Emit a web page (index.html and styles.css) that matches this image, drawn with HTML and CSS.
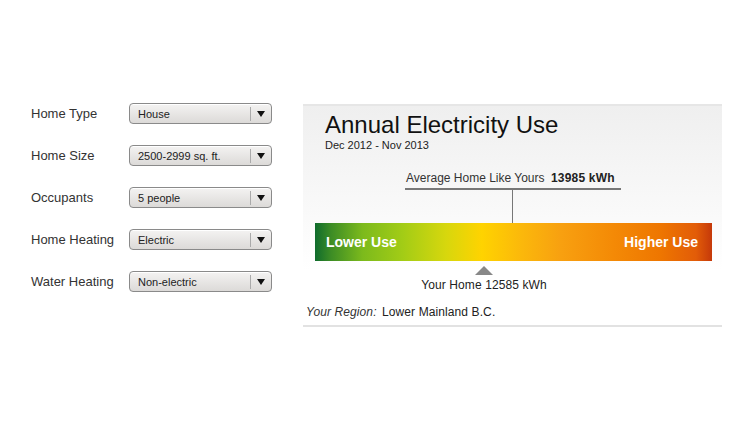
FILE: index.html
```html
<!DOCTYPE html>
<html>
<head>
<meta charset="utf-8">
<link rel="stylesheet" href="styles.css">
</head>
<body>
<div class="page">
  <div class="form">
    <div class="row"><span class="label">Home Type</span><div class="select"><span class="val">House</span><span class="arrow"></span></div></div>
    <div class="row"><span class="label">Home Size</span><div class="select"><span class="val">2500-2999 sq. ft.</span><span class="arrow"></span></div></div>
    <div class="row"><span class="label">Occupants</span><div class="select"><span class="val">5 people</span><span class="arrow"></span></div></div>
    <div class="row"><span class="label">Home Heating</span><div class="select"><span class="val">Electric</span><span class="arrow"></span></div></div>
    <div class="row"><span class="label">Water Heating</span><div class="select"><span class="val">Non-electric</span><span class="arrow"></span></div></div>
  </div>
  <div class="panel">
    <h1 class="title">Annual Electricity Use</h1>
    <div class="sub">Dec 2012 - Nov 2013</div>
    <div class="avg"><span>Average Home Like Yours</span> <b>13985 kWh</b></div>
    <div class="avgline"></div>
    <div class="stem"></div>
    <div class="bar"><span>Lower Use</span><span>Higher Use</span></div>
    <div class="you"><div class="tri"></div><div class="youtext">Your Home 12585 kWh</div></div>
    <div class="region"><i>Your Region:</i> Lower Mainland B.C.</div>
  </div>
</div>
</body>
</html>
```
FILE: styles.css
```css
html, body { margin: 0; padding: 0; background: #fff; }
body { font-family: "Liberation Sans", Arial, sans-serif; color: #333; }
.page { display: flex; padding: 103px 0 0 31px; }
.form { width: 272px; display: flex; flex-direction: column; gap: 21px; }
.row { display: flex; align-items: center; height: 21px; }
.label { width: 98px; font-size: 13px; color: #333; }
.select {
  width: 141px; height: 19px; border: 1px solid #8a8a8a; border-radius: 4px;
  background: linear-gradient(#f4f3f2, #dcdad8);
  display: flex; align-items: center; position: relative;
  box-shadow: inset 0 1px 0 #fff;
}
.val { flex: 1; font-size: 11px; color: #222; padding-left: 8px; }
.arrow { width: 20px; height: 14px; border-left: 1px solid #aaa; position: relative; }
.arrow::after {
  content: ""; position: absolute; left: 6px; top: 4px;
  border-left: 4px solid transparent; border-right: 4px solid transparent; border-top: 6px solid #111;
}
.panel {
  margin-top: 1px; width: 419px; height: 219px; position: relative;
  border-top: 2px solid #e6e6e6; border-bottom: 2px solid #e2e2e2;
  background: linear-gradient(#efefef, #ffffff 75%);
  display: flex; flex-direction: column;
}
.title { margin: 6px 0 0 22px; font-size: 24px; font-weight: normal; color: #111; line-height: 26px; }
.sub { margin: 1px 0 0 22px; font-size: 11px; color: #222; line-height: 12px; }
.avg { margin: 20px 0 0 0; align-self: flex-start; margin-left: 103px; font-size: 12px; color: #333; line-height: 14px; }
.avg b { color: #222; margin-left: 3px; letter-spacing: 0.2px; }
.avgline { margin: 3px 0 0 102px; width: 216px; height: 2px; background: #777; }
.stem { margin-left: 209px; width: 1px; height: 33px; background: #777; }
.bar {
  margin-left: 12px; width: 397px; height: 38px; box-sizing: border-box;
  padding: 0 14px 0 11px; display: flex; justify-content: space-between; align-items: center;
  color: #fff; font-weight: bold; font-size: 14px;
  background: linear-gradient(to right, #0f6b2c 0%, #3c8c25 4%, #7cba1c 12%, #a2cc16 22%, #d7d70d 33%, #ffd300 42%, #fbb80b 52%, #f8a010 62%, #f48a06 75%, #ee7600 87%, #e25c08 96%, #c5390a 100%);
}
.you { margin-left: 159px; width: 44px; display: flex; flex-direction: column; align-items: center; }
.tri { margin-top: 5px; border-left: 9px solid transparent; border-right: 9px solid transparent; border-bottom: 9px solid #888; }
.youtext { margin-top: 3px; font-size: 12px; white-space: nowrap; color: #222; line-height: 14px; letter-spacing: 0.1px; }
.region { margin: 13px 0 0 3px; font-size: 12px; color: #222; line-height: 14px; letter-spacing: 0.1px; }
.region i { color: #333; margin-right: 2px; }
```
